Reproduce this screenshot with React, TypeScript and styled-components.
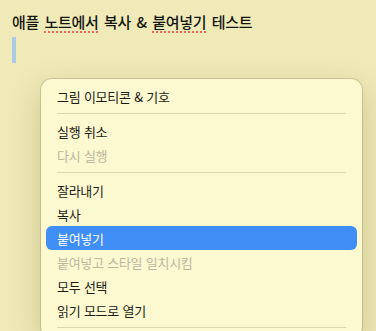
import React from "react";
import styled, { createGlobalStyle } from "styled-components";

const GlobalStyle = createGlobalStyle`
  html, body {
    margin: 0;
    height: 100%;
    overflow: hidden;
    background: #efeab8;
  }
  body {
    font-family: "Noto Sans CJK KR", "Noto Sans", sans-serif;
    -webkit-font-smoothing: antialiased;
  }
`;

const Page = styled.div`
  padding: 11px 12px 0;
  display: flex;
  flex-direction: column;
`;

const Title = styled.h1`
  margin: 0;
  font-size: 15px;
  line-height: 22px;
  font-weight: 500;
  color: #151510;
  letter-spacing: -0.3px;
  word-spacing: 2.4px;
`;

const Misspelled = styled.span`
  text-decoration: underline dotted #f0625a;
  text-decoration-thickness: 2px;
  text-underline-offset: 3px;
`;

const Caret = styled.div`
  margin-top: 4px;
  width: 4px;
  height: 26px;
  background: #a9cbe6;
`;

const Menu = styled.div`
  margin: 16px 0 0 29px;
  width: 321px;
  padding: 5px 0;
  background: #fcf8d0;
  border-radius: 11px;
  box-shadow: 0 0 0 1px rgba(120, 110, 60, 0.25),
    0 10px 30px rgba(90, 80, 20, 0.25);
  display: flex;
  flex-direction: column;
`;

const Item = styled.div<{ $disabled?: boolean; $active?: boolean }>`
  height: 24px;
  margin: 0 5px;
  padding: 0 11px;
  border-radius: 6px;
  display: flex;
  align-items: center;
  font-size: 13px;
  letter-spacing: -0.3px;
  word-spacing: 1px;
  color: ${(p) => (p.$active ? "#ffffff" : p.$disabled ? "#bbb79c" : "#1d1d18")};
  background: ${(p) => (p.$active ? "#3f8ef6" : "transparent")};
`;

const Separator = styled.div`
  height: 1px;
  margin: 5px 16px;
  background: #dcd8b4;
`;

type Entry = { label?: string; disabled?: boolean; active?: boolean; sep?: boolean };

const entries: Entry[] = [
  { label: "그림 이모티콘 & 기호" },
  { sep: true },
  { label: "실행 취소" },
  { label: "다시 실행", disabled: true },
  { sep: true },
  { label: "잘라내기" },
  { label: "복사" },
  { label: "붙여넣기", active: true },
  { label: "붙여넣고 스타일 일치시킴", disabled: true },
  { label: "모두 선택" },
  { label: "읽기 모드로 열기" },
  { sep: true },
];

export default function App() {
  return (
    <Page>
      <GlobalStyle />
      <Title>
        애플 <Misspelled>노트에서</Misspelled> 복사 &amp; <Misspelled>붙여넣기</Misspelled> 테스트
      </Title>
      <Caret />
      <Menu>
        {entries.map((e, i) =>
          e.sep ? (
            <Separator key={i} />
          ) : (
            <Item key={i} $disabled={e.disabled} $active={e.active}>
              {e.label}
            </Item>
          )
        )}
      </Menu>
    </Page>
  );
}
